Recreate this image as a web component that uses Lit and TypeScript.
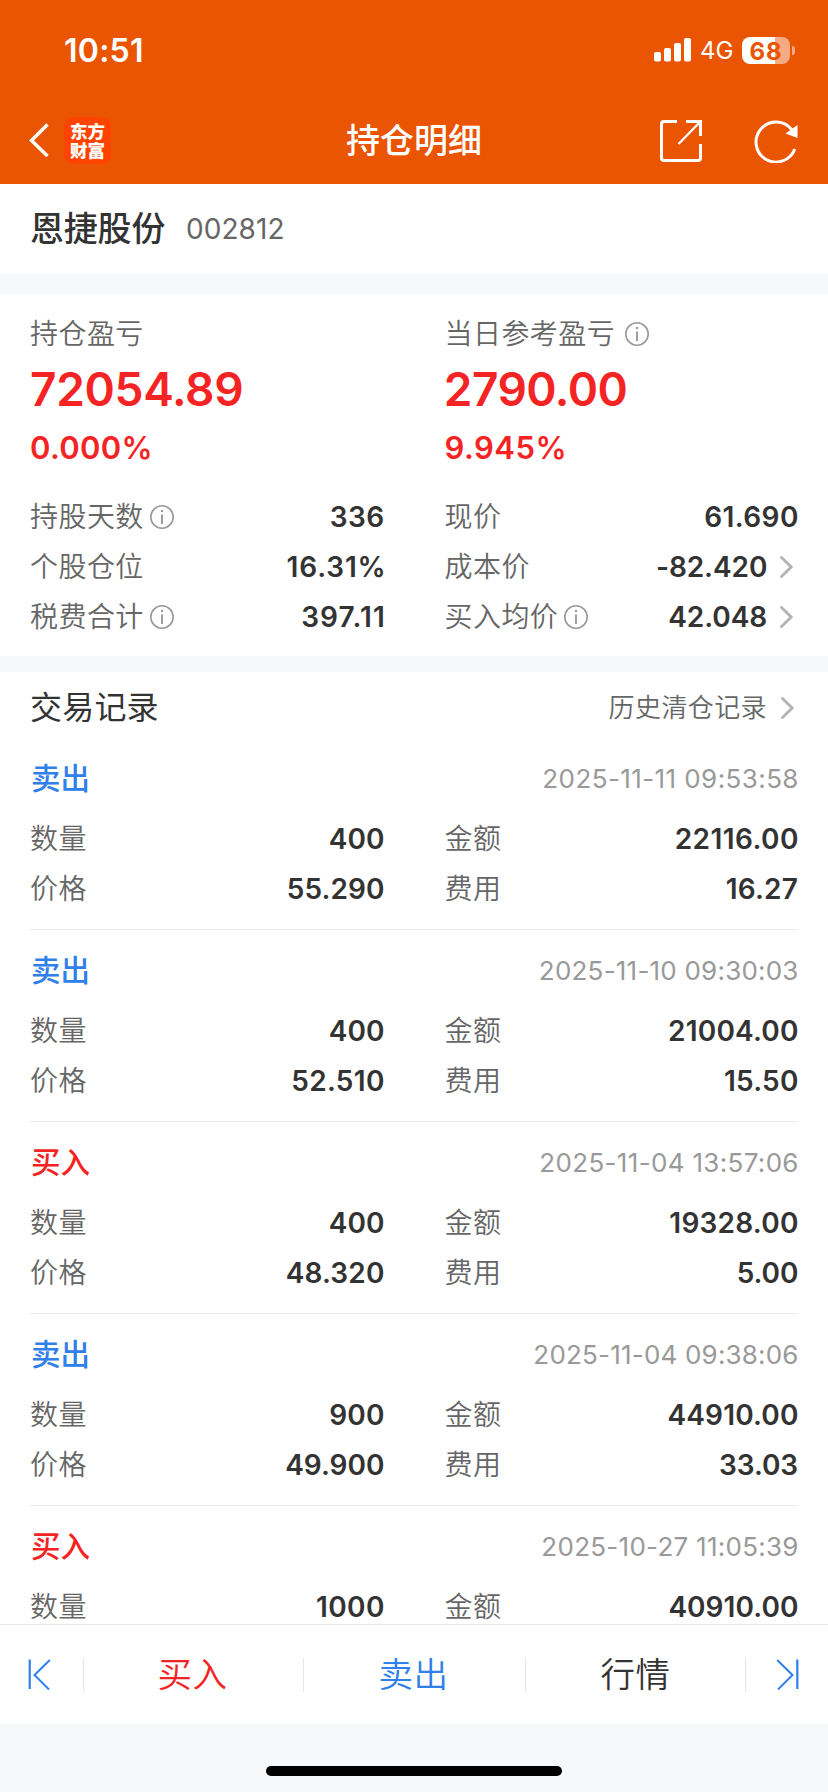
import { LitElement, html, svg, css, nothing } from "lit";
import { customElement } from "lit/decorators.js";
import { styleMap } from "lit/directives/style-map.js";
import { classMap } from "lit/directives/class-map.js";

/** A figure and the optical width (px) its glyphs should span. */
type Fig = [text: string, width: number];

const ctx = document.createElement("canvas").getContext("2d")!;

/** Tracking that makes a string's ink span the wanted width and sit flush with its box. */
function track([text, width]: Fig, size: number, weight: number, family = "Inter") {
  ctx.font = `${weight} ${size * 10}px "${family}"`;
  const m = ctx.measureText(text);
  const left = -m.actualBoundingBoxLeft / 10;
  const right = (m.width - m.actualBoundingBoxRight) / 10;
  const ls = (width - (m.width / 10 - left - right)) / (text.length - 1);
  return styleMap({
    letterSpacing: `${ls.toFixed(3)}px`,
    marginLeft: `${(-left).toFixed(2)}px`,
    marginRight: `${(-right - ls).toFixed(2)}px`,
  });
}

interface Trade {
  side: "buy" | "sell";
  time: Fig;
  qty: Fig;
  amount: Fig;
  price: Fig;
  fee: Fig;
}

const trades: Trade[] = [
  { side: "sell", time: ["2025-11-11 09:53:58", 253], qty: ["400", 53], amount: ["22116.00", 121], price: ["55.290", 94.5], fee: ["16.27", 70.3] },
  { side: "sell", time: ["2025-11-10 09:30:03", 256.5], qty: ["400", 53], amount: ["21004.00", 127.6], price: ["52.510", 90], fee: ["15.50", 72.2] },
  { side: "buy", time: ["2025-11-04 13:57:06", 256], qty: ["400", 53], amount: ["19328.00", 126.8], price: ["48.320", 96], fee: ["5.00", 58.5] },
  { side: "sell", time: ["2025-11-04 09:38:06", 262], qty: ["900", 52.5], amount: ["44910.00", 128.2], price: ["49.900", 96.5], fee: ["33.03", 76.6] },
  { side: "buy", time: ["2025-10-27 11:05:39", 254], qty: ["1000", 66], amount: ["40910.00", 127.3], price: ["40.910", 94], fee: ["30.68", 77] },
];

const info = html`<svg class="info" width="24" height="24" viewBox="0 0 24 24" fill="none" stroke="#999">
  <circle cx="12" cy="12" r="11.2" stroke-width="1.6" />
  <path d="M12 9.5V19" stroke-width="1.9" />
  <circle cx="12" cy="6" r="1.2" fill="#999" stroke="none" />
</svg>`;

const arrow = html`<svg class="arrow" width="13" height="22" viewBox="0 0 13 22" fill="none" stroke="#b4b4b4" stroke-width="2.8">
  <path d="M1.5 1.5 11.2 11 1.5 20.5" stroke-linecap="round" />
</svg>`;

@customElement("app-root")
export class AppRoot extends LitElement {
  static styles = css`
    :host {
      display: flex;
      flex-direction: column;
      height: 1792px;
      overflow: hidden;
      background: #f7f8fa;
      color: #333;
      font-family: Inter, "Noto Sans CJK SC", sans-serif;
      line-height: 1;
    }
    svg { display: block; flex: none; }
    header { flex: none; height: 184px; background: #ea5504; color: #fff; }
    .status { display: flex; align-items: center; height: 100px; padding: 0 33px 0 65px; }
    .clock { font-size: 32px; font-weight: 600; padding-top: 1px; }
    .cluster { display: flex; align-items: center; margin-left: auto; }
    .signal { margin-right: 9px; }
    .net { font-size: 24px; font-weight: 400; width: 42px; margin-top: 2px; }
    .battery { display: flex; align-items: center; gap: 2px; }
    .cell {
      box-sizing: border-box; width: 48px; height: 27px; border-radius: 8px; display: grid; place-items: center;
      background: linear-gradient(90deg, #fff 33px, rgba(255, 255, 255, 0.5) 33px);
      color: #ea5504; font-size: 24px; font-weight: 700; letter-spacing: 0.8px; padding-top: 2px; line-height: 25px;
    }
    .cap { width: 3px; height: 9px; border-radius: 0 4px 4px 0; background: rgba(255, 255, 255, 0.5); }
    .nav { display: grid; grid-template-columns: 1fr auto 1fr; align-items: center; height: 80px; padding: 0 30px 0 29px; box-sizing: border-box; }
    .back { display: flex; align-items: center; gap: 15px; }
    .logo {
      width: 47px; height: 47px; border-radius: 9px; background: #ff4400; display: grid; place-content: center;
      font: 900 17.5px/19.5px "Noto Sans CJK SC", sans-serif; text-align: center;
    }
    .title { font-size: 34px; font-weight: 500; padding-top: 2px; margin-left: 1px; }
    .tools { display: flex; justify-content: flex-end; align-items: center; gap: 52px; padding-top: 2px; }

    .stock { flex: none; height: 90px; background: #fff; display: flex; align-items: center; padding: 0 30px; box-sizing: border-box; margin-bottom: 20px; }
    .name { font-size: 34px; font-weight: 500; letter-spacing: -0.2px; margin-right: 22px; }
    .code { font-size: 28px; color: #666; }

    .summary { flex: none; height: 362px; background: #fff; box-sizing: border-box; padding: 15px 31px 0 30px; margin-bottom: 16px; }
    .cols { display: grid; grid-template-columns: 353px 352.5px; column-gap: 61.5px; }
    .label { font-size: 28px; font-weight: 350; color: #666; letter-spacing: 0.45px; white-space: nowrap; }
    .headline { display: flex; flex-direction: column; align-items: flex-start; color: #f52424; }
    .headline .label { display: flex; align-items: center; height: 50px; }
    .headline .info { margin-left: 10px; }
    .big { font-size: 46px; font-weight: 600; height: 61px; line-height: 61px; padding-left: 1.5px; }
    .pct { font-size: 31px; font-weight: 600; height: 55px; line-height: 55px; padding-left: 1.5px; }
    .summary .rows { margin-top: 17px; }
    .row { display: flex; align-items: center; height: 50px; }
    .row .label { display: flex; align-items: center; margin-right: auto; }
    .row .info { margin-left: 6px; }
    .value { font-size: 28px; font-weight: 600; }
    .arrow { margin: 0 4px 0 14px; }

    .trades { flex: 1; min-height: 0; overflow: hidden; background: #fff; padding: 0 30px; }
    .bar { display: flex; align-items: center; height: 66px; padding: 5px 0 0; box-sizing: border-box; }
    .bar h2 { margin: 0 auto 0 0; font-size: 32px; font-weight: 400; letter-spacing: 0.2px; }
    .more { display: flex; align-items: center; font-size: 26px; font-weight: 350; color: #666; letter-spacing: 0.4px; }
    .trade { height: 192px; box-sizing: border-box; border-bottom: 1px solid #ebebeb; padding: 15.5px 1px 0 0; }
    .head { display: flex; align-items: center; justify-content: space-between; height: 50px; margin-bottom: 10px; }
    .side { font-size: 29.5px; font-weight: 500; padding-left: 1px; }
    .sell { color: #2f80e8; }
    .buy { color: #f52424; }
    .time { font-size: 26px; color: #999; }

    footer { flex: none; height: 100px; box-sizing: border-box; border-top: 1px solid #e8e8e8; background: #fff; display: grid; grid-template-columns: 84px 220px 222px 220px 82px; align-items: center; }
    .tab { display: grid; place-items: center; height: 34px; box-sizing: border-box; border-right: 1px solid #e6e6e6; font-size: 34.5px; letter-spacing: 0.6px; font-weight: 350; white-space: nowrap; }
    .tab.trim { padding-right: 2px; }
    .tab:first-child { padding-right: 5px; }
    .tab:last-child { border: 0; }
    .home { flex: none; height: 68px; display: flex; justify-content: center; align-items: flex-end; padding-bottom: 16px; box-sizing: border-box; }
    .home i { width: 296px; height: 10px; border-radius: 5px; background: #000; }
  `;

  private row(label: string, fig: Fig, opts: { info?: boolean; more?: boolean } = {}) {
    return html`<div class="row">
      <span class="label">${label}${opts.info ? info : nothing}</span>
      <span class="value" style=${track(fig, 28, 600)}>${fig[0]}</span>
      ${opts.more ? arrow : nothing}
    </div>`;
  }

  private trade(t: Trade) {
    return html`<article class="trade">
      <div class="head">
        <span class=${classMap({ side: true, buy: t.side === "buy", sell: t.side === "sell" })}>${t.side === "buy" ? "买入" : "卖出"}</span>
        <time class="time" style=${track(t.time, 26, 400)}>${t.time[0]}</time>
      </div>
      <div class="cols">
        ${this.row("数量", t.qty)}${this.row("金额", t.amount)}
        ${this.row("价格", t.price)}${this.row("费用", t.fee)}
      </div>
    </article>`;
  }

  render() {
    const end = svg`<path d="M1.2 1 16.5 16 2 30.5" stroke-width="2" /><path d="M21.3 .5V30" stroke-width="2.2" />`;
    return html`
      <header>
        <div class="status">
          <span class="clock" style=${track(["10:51", 76.5], 32, 600)}>10:51</span>
          <div class="cluster">
            <svg class="signal" width="37" height="24" viewBox="0 0 37 24" fill="#fff">
              <rect y="14" width="7" height="9.5" rx="2" /><rect x="10" y="10" width="7" height="13.5" rx="2" />
              <rect x="20" y="5" width="7" height="18.5" rx="2" /><rect x="30" width="7" height="23.5" rx="2" />
            </svg>
            <span class="net">4G</span>
            <div class="battery"><span class="cell">68</span><span class="cap"></span></div>
          </div>
        </div>
        <div class="nav">
          <div class="back">
            <svg width="20" height="34" viewBox="0 0 20 34" fill="none" stroke="#fff" stroke-width="3.4"><path d="M18.5 1.5 2.5 17.5 18.5 33" /></svg>
            <span class="logo">东方<br />财富</span>
          </div>
          <span class="title">持仓明细</span>
          <div class="tools">
            <svg width="42" height="42" viewBox="0 0 42 42" fill="none" stroke="#fff" stroke-width="3">
              <path d="M17 1.5H4Q1.5 1.5 1.5 4V38Q1.5 40.5 4 40.5H38Q40.5 40.5 40.5 38V24" />
              <path d="M26 1.5H40.5V16" /><path d="M40 2 18.5 24" stroke-width="2.3" />
            </svg>
            <svg width="44" height="44" viewBox="0 0 44 44" fill="none" stroke="#fff" stroke-width="3">
              <path d="M40.8 30A20 20 0 1 1 38 11" /><path d="M43.5 6V19L31.5 14.5Z" fill="#fff" stroke="none" />
            </svg>
          </div>
        </div>
      </header>

      <section class="stock"><span class="name">恩捷股份</span><span class="code" style=${track(["002812", 95.5], 28, 400)}>002812</span></section>

      <section class="summary">
        <div class="cols">
          <div class="headline">
            <span class="label">持仓盈亏</span>
            <span class="big" style=${track(["72054.89", 210], 46, 600)}>72054.89</span>
            <span class="pct" style=${track(["0.000%", 118], 31, 600)}>0.000%</span>
          </div>
          <div class="headline">
            <span class="label">当日参考盈亏${info}</span>
            <span class="big" style=${track(["2790.00", 179.5], 46, 600)}>2790.00</span>
            <span class="pct" style=${track(["9.945%", 117.5], 31, 600)}>9.945%</span>
          </div>
        </div>
        <div class="cols rows">
          ${this.row("持股天数", ["336", 52], { info: true })}${this.row("现价", ["61.690", 91.5])}
          ${this.row("个股仓位", ["16.31%", 95.5])}${this.row("成本价", ["-82.420", 108.3], { more: true })}
          ${this.row("税费合计", ["397.11", 80.5], { info: true })}${this.row("买入均价", ["42.048", 96.5], { info: true, more: true })}
        </div>
      </section>

      <section class="trades">
        <div class="bar"><h2>交易记录</h2><span class="more">历史清仓记录${arrow}</span></div>
        ${trades.map((t) => this.trade(t))}
      </section>

      <footer>
        <span class="tab"><svg width="23" height="31" viewBox="0 0 23 31" fill="none" stroke="#2f80e8"><g transform="matrix(-1 0 0 1 23 0)">${end}</g></svg></span>
        <span class="tab trim buy">买入</span><span class="tab trim sell">卖出</span><span class="tab">行情</span>
        <span class="tab"><svg width="23" height="31" viewBox="0 0 23 31" fill="none" stroke="#2f80e8">${end}</svg></span>
      </footer>
      <div class="home"><i></i></div>
    `;
  }
}
